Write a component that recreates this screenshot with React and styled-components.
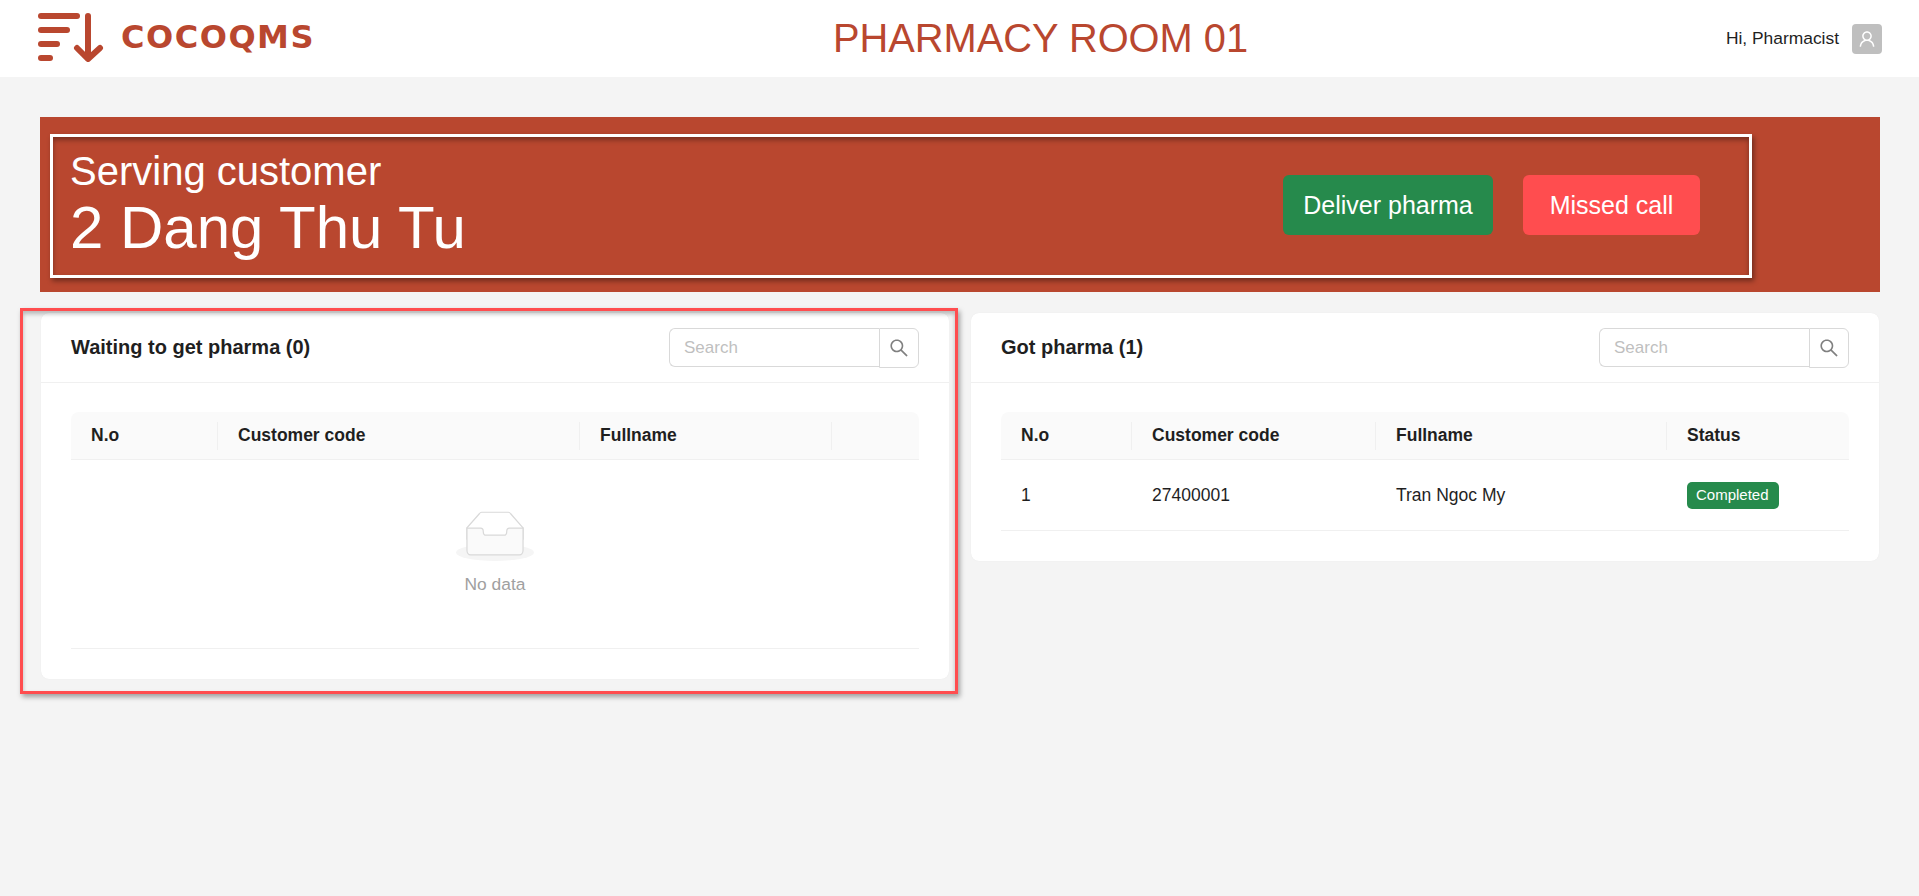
import styled, { createGlobalStyle } from "styled-components";
import { AiOutlineSearch, AiOutlineUser } from "react-icons/ai";

const waitingColumns = [
  { label: "N.o", width: 147 },
  { label: "Customer code", width: 362 },
  { label: "Fullname", width: 252 },
  { label: "", width: 87 },
];

const gotColumns = [
  { label: "N.o", width: 131 },
  { label: "Customer code", width: 244 },
  { label: "Fullname", width: 291 },
  { label: "Status", width: 182 },
];

const gotRows = [{ no: 1, code: "27400001", name: "Tran Ngoc My" }];

function LogoMark() {
  return (
    <svg width="66" height="50" viewBox="0 0 66 50" fill="none" stroke="#b9472f" strokeWidth="6" strokeLinecap="round" strokeLinejoin="round">
      <path d="M3 4H39" />
      <path d="M3 18H29" />
      <path d="M3 32H19" />
      <path d="M3 46H12" />
      <path d="M50 4V46" />
      <path d="M39 36L50 47L62 36" />
    </svg>
  );
}

function EmptyIcon() {
  return (
    <svg width="78" height="50" viewBox="0 0 64 41">
      <g transform="translate(0 1)" fill="none" fillRule="evenodd">
        <ellipse fill="#f5f5f5" cx="32" cy="33" rx="32" ry="7" />
        <g fillRule="nonzero" stroke="#d9d9d9">
          <path d="M55 12.76L44.854 1.258C44.367.474 43.656 0 42.907 0H21.093c-.749 0-1.46.474-1.947 1.257L9 12.761V22h46v-9.24z" />
          <path
            d="M41.613 15.931c0-1.605.994-2.93 2.227-2.931H55v18.137C55 33.26 53.68 35 52.05 35h-40.1C10.32 35 9 33.259 9 31.137V13h11.16c1.233 0 2.227 1.323 2.227 2.928v.022c0 1.605 1.005 2.901 2.237 2.901h14.752c1.232 0 2.237-1.308 2.237-2.913v-.007z"
            fill="#fafafa"
          />
        </g>
      </g>
    </svg>
  );
}

function SearchBox() {
  return (
    <Search>
      <SearchInput placeholder="Search" />
      <SearchButton type="button">
        <AiOutlineSearch size={22} />
      </SearchButton>
    </Search>
  );
}

function TableHead({ columns }) {
  return (
    <>
      <colgroup>
        {columns.map((column, i) => (
          <Col key={i} $width={column.width} />
        ))}
      </colgroup>
      <thead>
        <tr>
          {columns.map((column, i) => (
            <Th key={i}>{column.label}</Th>
          ))}
        </tr>
      </thead>
    </>
  );
}

export default function App() {
  return (
    <>
      <GlobalStyle />
      <Header>
        <Logo>
          <LogoMark />
          <LogoText>COCOQMS</LogoText>
        </Logo>
        <RoomTitle>PHARMACY ROOM 01</RoomTitle>
        <User>
          <span>Hi, Pharmacist</span>
          <Avatar>
            <AiOutlineUser size={20} />
          </Avatar>
        </User>
      </Header>

      <Main>
        <Banner>
          <ServingBox>
            <ServingText>
              <ServingLabel>Serving customer</ServingLabel>
              <ServingName>2 Dang Thu Tu</ServingName>
            </ServingText>
            <Actions>
              <ActionButton type="button" $color="#268a4c" $width={210}>
                Deliver pharma
              </ActionButton>
              <ActionButton type="button" $color="#ff4d4f" $width={177}>
                Missed call
              </ActionButton>
            </Actions>
          </ServingBox>
        </Banner>

        <Cards>
          <Card>
            <Highlight />
            <CardHeader>
              <CardTitle>Waiting to get pharma (0)</CardTitle>
              <SearchBox />
            </CardHeader>
            <CardBody>
              <Table>
                <TableHead columns={waitingColumns} />
                <tbody>
                  <tr>
                    <EmptyCell colSpan={4}>
                      <EmptyContent>
                        <EmptyIcon />
                        <EmptyText>No data</EmptyText>
                      </EmptyContent>
                    </EmptyCell>
                  </tr>
                </tbody>
              </Table>
            </CardBody>
          </Card>

          <Card>
            <CardHeader>
              <CardTitle>Got pharma (1)</CardTitle>
              <SearchBox />
            </CardHeader>
            <CardBody>
              <Table>
                <TableHead columns={gotColumns} />
                <tbody>
                  {gotRows.map((row) => (
                    <tr key={row.no}>
                      <Td>{row.no}</Td>
                      <Td>{row.code}</Td>
                      <Td>{row.name}</Td>
                      <Td>
                        <StatusTag>Completed</StatusTag>
                      </Td>
                    </tr>
                  ))}
                </tbody>
              </Table>
            </CardBody>
          </Card>
        </Cards>
      </Main>
    </>
  );
}

const GlobalStyle = createGlobalStyle`
  * {
    box-sizing: border-box;
  }

  html, body {
    margin: 0;
    min-height: 896px;
    background: #f4f4f4;
    font-family: "Liberation Sans", Arial, sans-serif;
    color: #1f1f1f;
    overflow: hidden;
  }
`;

const Header = styled.header`
  height: 77px;
  background: #ffffff;
  display: flex;
  align-items: center;
  padding: 0 37px 0 38px;
`;

const Logo = styled.div`
  width: 795px;
  padding-bottom: 3px;
  display: flex;
  align-items: center;
  gap: 17px;
`;

const LogoText = styled.span`
  font-family: "DejaVu Sans", sans-serif;
  font-weight: 700;
  font-size: 32px;
  letter-spacing: 1.5px;
  color: #b9472f;
`;

const RoomTitle = styled.h1`
  margin: 0;
  font-weight: 400;
  font-size: 39.8px;
  color: #b9472f;
`;

const User = styled.div`
  margin-left: auto;
  display: flex;
  align-items: center;
  gap: 13px;
  font-size: 17.4px;
`;

const Avatar = styled.div`
  width: 30px;
  height: 30px;
  border-radius: 4px;
  background: #bfbfbf;
  color: #ffffff;
  display: flex;
  align-items: center;
  justify-content: center;
`;

const Main = styled.main`
  padding-top: 40px;
`;

const Banner = styled.section`
  margin: 0 39px 0 40px;
  height: 175px;
  padding: 17px 128px 14px 10px;
  background: #b9472f;
`;

const ServingBox = styled.div`
  height: 144px;
  border: 3px solid #ffffff;
  padding: 0 49px 0 17px;
  display: flex;
  align-items: center;
  justify-content: space-between;
  color: #ffffff;
  box-shadow: 2px 3px 5px rgba(0, 0, 0, 0.4), inset 0 3px 5px rgba(0, 0, 0, 0.35);
`;

const ServingText = styled.div`
  padding-bottom: 3px;
`;

const ServingLabel = styled.div`
  font-size: 40px;
  line-height: 46px;
`;

const ServingName = styled.div`
  font-size: 60px;
  line-height: 68px;
`;

const Actions = styled.div`
  display: flex;
  gap: 30px;
  margin-bottom: 2px;
`;

const ActionButton = styled.button`
  width: ${(props) => props.$width}px;
  height: 60px;
  border: 0;
  border-radius: 6px;
  background: ${(props) => props.$color};
  color: #ffffff;
  font-family: inherit;
  font-size: 25px;
`;

const Cards = styled.div`
  margin-top: 21px;
  padding: 0 40px 0 41px;
  display: grid;
  grid-template-columns: 1fr 1fr;
  gap: 22px;
  align-items: start;
`;

const Card = styled.section`
  position: relative;
  background: #ffffff;
  border-radius: 8px;
  box-shadow: 0 0 1px rgba(0, 0, 0, 0.08);
`;

const Highlight = styled.div`
  position: absolute;
  top: -5px;
  right: -9px;
  bottom: -15px;
  left: -21px;
  border: 3px solid #ff4d4f;
  box-shadow: 2px 3px 5px rgba(0, 0, 0, 0.35), inset 0 3px 4px rgba(0, 0, 0, 0.25);
  pointer-events: none;
`;

const CardHeader = styled.div`
  height: 70px;
  padding: 15px 30px 0;
  border-bottom: 1px solid #f0f0f0;
  display: flex;
  justify-content: space-between;
  align-items: flex-start;
`;

const CardTitle = styled.h2`
  margin: 0;
  font-size: 20px;
  line-height: 39px;
  font-weight: 700;
`;

const Search = styled.div`
  display: flex;
  align-items: flex-start;
  width: 250px;
`;

const SearchInput = styled.input`
  flex: 1;
  min-width: 0;
  height: 39px;
  padding: 0 14px;
  border: 1px solid #d9d9d9;
  border-right: 0;
  border-radius: 6px 0 0 6px;
  outline: none;
  background: #ffffff;
  font-family: inherit;
  font-size: 17px;

  &::placeholder {
    color: #bfbfbf;
  }
`;

const SearchButton = styled.button`
  width: 40px;
  height: 40px;
  padding: 0;
  border: 1px solid #d9d9d9;
  border-radius: 0 6px 6px 0;
  background: #ffffff;
  color: #808080;
  display: flex;
  align-items: center;
  justify-content: center;
`;

const CardBody = styled.div`
  padding: 29px 30px 30px;
`;

const Table = styled.table`
  width: 848px;
  table-layout: fixed;
  border-collapse: separate;
  border-spacing: 0;
  font-size: 17.5px;
`;

const Col = styled.col`
  width: ${(props) => props.$width}px;
`;

const Th = styled.th`
  position: relative;
  height: 48px;
  padding: 0 20px;
  background: #fafafa;
  border-bottom: 1px solid #f0f0f0;
  text-align: left;
  font-weight: 700;

  &:first-child {
    border-top-left-radius: 8px;
  }

  &:last-child {
    border-top-right-radius: 8px;
  }

  &:not(:last-child)::before {
    content: "";
    position: absolute;
    top: 10px;
    right: 0;
    width: 1px;
    height: 28px;
    background: #f0f0f0;
  }
`;

const Td = styled.td`
  height: 71px;
  padding: 0 20px;
  border-bottom: 1px solid #f0f0f0;
`;

const EmptyCell = styled.td`
  height: 189px;
  border-bottom: 1px solid #f0f0f0;
`;

const EmptyContent = styled.div`
  display: flex;
  flex-direction: column;
  align-items: center;
  gap: 14px;
  padding-bottom: 5px;
`;

const EmptyText = styled.div`
  color: #a0a0a0;
  font-size: 17.4px;
  line-height: 18px;
`;

const StatusTag = styled.span`
  display: inline-block;
  padding: 0 10px 0 9px;
  height: 27px;
  line-height: 26px;
  border-radius: 5px;
  background: #268a4c;
  color: #ffffff;
  font-size: 15px;
`;
